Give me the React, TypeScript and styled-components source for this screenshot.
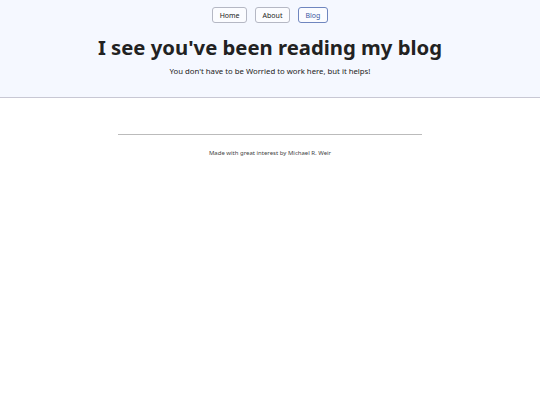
import React from "react";
import styled, { createGlobalStyle } from "styled-components";

const GlobalStyle = createGlobalStyle`
  body {
    margin: 0;
    font-family: "Noto Sans", "DejaVu Sans", sans-serif;
    background: #ffffff;
    color: #222;
  }
`;

const Header = styled.header`
  background-color: #f5f8ff;
  border-bottom: 1px solid #c8c8d4;
  display: flex;
  flex-direction: column;
  align-items: center;
  padding: 7px 0 20px;
`;

const Nav = styled.nav`
  display: flex;
  gap: 8px;
`;

const NavButton = styled.a<{ $active?: boolean }>`
  display: inline-flex;
  align-items: center;
  justify-content: center;
  box-sizing: border-box;
  height: 16px;
  padding: 0 6.5px;
  font-size: 7px;
  text-decoration: none;
  color: ${(p) => (p.$active ? "#3a58a0" : "#222")};
  border: 1px solid ${(p) => (p.$active ? "#6f86bf" : "#b5b8c4")};
  border-radius: 3px;
  background: #fbfcff;
`;

const Title = styled.h1`
  margin: 12px 0 0;
  font-size: 20.3px;
  font-weight: 700;
  line-height: 25px;
  color: #222;
`;

const Subtitle = styled.p`
  margin: 6px 0 0;
  font-size: 7.75px;
  line-height: 11px;
  color: #222;
`;

const Footer = styled.footer`
  display: flex;
  flex-direction: column;
  align-items: center;
  padding-top: 36px;
`;

const Rule = styled.hr`
  width: 304px;
  margin: 0;
  border: none;
  border-top: 1px solid #bbb;
`;

const Credit = styled.p`
  margin: 14px 0 0;
  font-size: 6px;
  line-height: 8px;
  color: #444;
`;

const App = () => {
  return (
    <>
      <GlobalStyle />
      <Header>
        <Nav>
          <NavButton href="#">Home</NavButton>
          <NavButton href="#">About</NavButton>
          <NavButton href="#" $active>
            Blog
          </NavButton>
        </Nav>
        <Title>I see you've been reading my blog</Title>
        <Subtitle>You don't have to be Worried to work here, but it helps!</Subtitle>
      </Header>
      <Footer>
        <Rule />
        <Credit>Made with great interest by Michael R. Weir</Credit>
      </Footer>
    </>
  );
};

export default App;
